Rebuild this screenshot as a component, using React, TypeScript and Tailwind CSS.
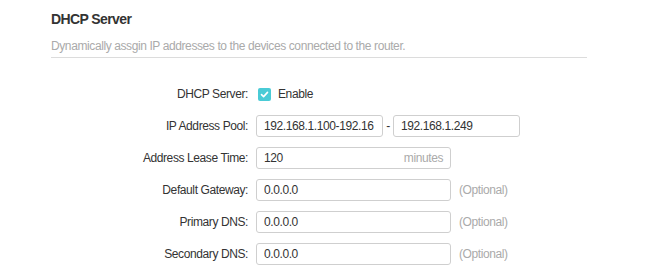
import React from "react";

function Label({ children }: { children: React.ReactNode }) {
  return (
    <div className="w-[197px] shrink-0 text-right text-[#333] pr-0">{children}</div>
  );
}

function Box({ w, children, right }: { w: string; children?: React.ReactNode; right?: React.ReactNode }) {
  return (
    <div
      className={`${w} h-[22px] border border-[#cfcfcf] rounded-[3px] bg-white flex items-center pl-[7px] pr-[7px] overflow-hidden whitespace-nowrap text-[#333]`}
    >
      <span className="flex-1 overflow-hidden">{children}</span>
      {right}
    </div>
  );
}

function Row({ label, children }: { label: string; children: React.ReactNode }) {
  return (
    <div className="flex items-center h-[22px]">
      <Label>{label}</Label>
      <div className="ml-[8px] flex items-center">{children}</div>
    </div>
  );
}

export default function App() {
  return (
    <div className="w-[649px] h-[278px] bg-white font-['Liberation_Sans',Arial,sans-serif] text-[12px] tracking-[-0.4px] leading-[16px]">
      <div className="pl-[51px] pt-[11px]">
        <div className="w-[536px]">
          <div className="text-[14px] font-bold text-[#333] leading-[16px] tracking-[-0.6px]">DHCP Server</div>
          <div className="mt-[11px] pb-[3px] text-[#aaa] border-b border-[#dcdcdc]">
            Dynamically assgin IP addresses to the devices connected to the router.
          </div>
        </div>
        <div className="mt-[25px] flex flex-col gap-[10px]">
          <Row label="DHCP Server:">
            <div className="ml-[2px] w-[13px] h-[13px] rounded-[2px] bg-[#4acbd6] flex items-center justify-center">
              <svg width="9" height="9" viewBox="0 0 9 9">
                <path d="M1.5 4.6 L3.6 6.6 L7.5 2.4" fill="none" stroke="#fff" strokeWidth="1.6" strokeLinecap="round" strokeLinejoin="round" />
              </svg>
            </div>
            <span className="ml-[7px] text-[#333]">Enable</span>
          </Row>
          <Row label="IP Address Pool:">
            <Box w="w-[127px]">192.168.1.100-192.16</Box>
            <span className="w-[10px] text-center text-[#333]">-</span>
            <Box w="w-[127px]">192.168.1.249</Box>
          </Row>
          <Row label="Address Lease Time:">
            <Box w="w-[195px]" right={<span className="text-[#aaa]">minutes</span>}>120</Box>
          </Row>
          <Row label="Default Gateway:">
            <Box w="w-[195px]">0.0.0.0</Box>
            <span className="ml-[8px] text-[#aaa]">(Optional)</span>
          </Row>
          <Row label="Primary DNS:">
            <Box w="w-[195px]">0.0.0.0</Box>
            <span className="ml-[8px] text-[#aaa]">(Optional)</span>
          </Row>
          <Row label="Secondary DNS:">
            <Box w="w-[195px]">0.0.0.0</Box>
            <span className="ml-[8px] text-[#aaa]">(Optional)</span>
          </Row>
        </div>
      </div>
    </div>
  );
}
